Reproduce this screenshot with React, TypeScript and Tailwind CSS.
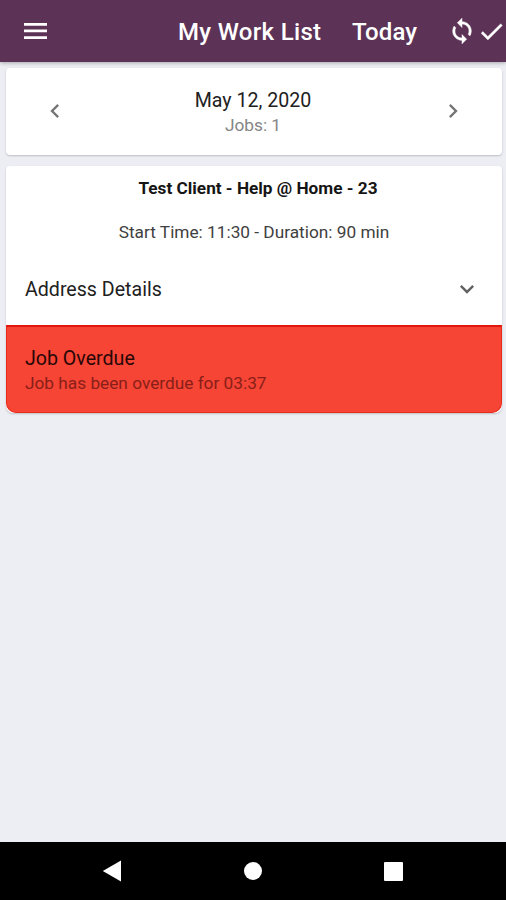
import { MdCheck, MdChevronLeft, MdChevronRight, MdExpandMore, MdSync } from "react-icons/md";

function Header() {
  return (
    <header className="z-10 flex h-[62px] shrink-0 items-center bg-[#5c3256] text-white shadow-[0_1px_4px_rgba(0,0,0,0.3)]">
      <button className="ml-5 w-[30px] pl-[3.6px]" aria-label="Menu">
        <svg width="23" height="16" viewBox="0 0 23 16" fill="currentColor">
          <path d="M0 0H23V2.7H0ZM0 6.6H23V9.3H0ZM0 13.2H23V15.9H0Z" />
        </svg>
      </button>
      <h1 className="ml-32 w-[174px] whitespace-nowrap pt-0.5 text-2xl font-medium tracking-[0.33px]">
        My Work List
      </h1>
      <span className="w-[96px] whitespace-nowrap pt-0.5 text-2xl font-medium tracking-[0.1px]">Today</span>
      <button className="w-[28px]" aria-label="Sync">
        <MdSync size={28} className="[&>path:last-child]:stroke-current [&>path:last-child]:stroke-[0.4]" />
      </button>
      <button className="ml-px w-[29px]" aria-label="Complete">
        <MdCheck size={29} className="[&>path:last-child]:stroke-current [&>path:last-child]:stroke-[0.3]" />
      </button>
    </header>
  );
}

function DateCard() {
  return (
    <section className="flex h-[87px] items-center justify-between rounded-[4px] bg-white pb-0.5 pl-[35px] pr-[35px] shadow-[0_1px_2px_rgba(0,0,0,0.2)]">
      <MdChevronLeft size={28} className="text-[#757575]" />
      <div className="pr-0.5 pt-[3px] text-center">
        <p className="text-[19.6px] leading-[26px] text-[#212121]">May 12, 2020</p>
        <p className="text-[17.25px] leading-[23px] text-[#858585]">Jobs: 1</p>
      </div>
      <MdChevronRight size={28} className="text-[#757575]" />
    </section>
  );
}

function JobCard() {
  return (
    <section className="mt-[11px] flex h-[247px] flex-col rounded-[4px] rounded-b-[7px] bg-white shadow-[0_1px_2px_rgba(0,0,0,0.2)]">
      <h2 className="mt-2.5 pl-2 text-center text-[17.2px] font-bold leading-6 text-[#151515]">
        Test Client - Help @ Home - 23
      </h2>
      <p className="mt-5 text-center text-[17.25px] leading-6 text-[#404040]">Start Time: 11:30 - Duration: 90 min</p>
      <div className="flex h-[81px] items-center justify-between pl-[19px] pr-[21px] pt-[9px]">
        <span className="pt-0.5 text-[19.6px] text-[#212121]">Address Details</span>
        <MdExpandMore size={28} className="text-[#616161]" />
      </div>
      <div className="h-[88px] rounded-b-[10px] border border-t-2 border-[#e92b1c] border-t-[#e2180d] bg-[#f64435] pl-[18px] pt-[19px]">
        <p className="text-[19.6px] leading-[26px] text-[#280807]">Job Overdue</p>
        <p className="text-[17.25px] leading-[23px] text-[#891f18]">Job has been overdue for 03:37</p>
      </div>
    </section>
  );
}

function NavigationBar() {
  return (
    <nav className="flex h-[58px] shrink-0 items-center bg-black pl-[102px]">
      <svg width="20" height="22" viewBox="0 0 20 22" fill="white">
        <path d="M0.8 11 19 0.5V21.5Z" />
      </svg>
      <span className="ml-[122px] h-[18px] w-[18px] rounded-full bg-white" />
      <span className="ml-[122px] h-[19px] w-[19px] rounded-[1px] bg-white" />
    </nav>
  );
}

export default function App() {
  return (
    <div className="flex h-[900px] w-[506px] flex-col overflow-hidden bg-[#edeef4] font-['Roboto',sans-serif]">
      <Header />
      <main className="flex-1 pl-1.5 pr-[4px] pt-1.5">
        <DateCard />
        <JobCard />
      </main>
      <NavigationBar />
    </div>
  );
}
